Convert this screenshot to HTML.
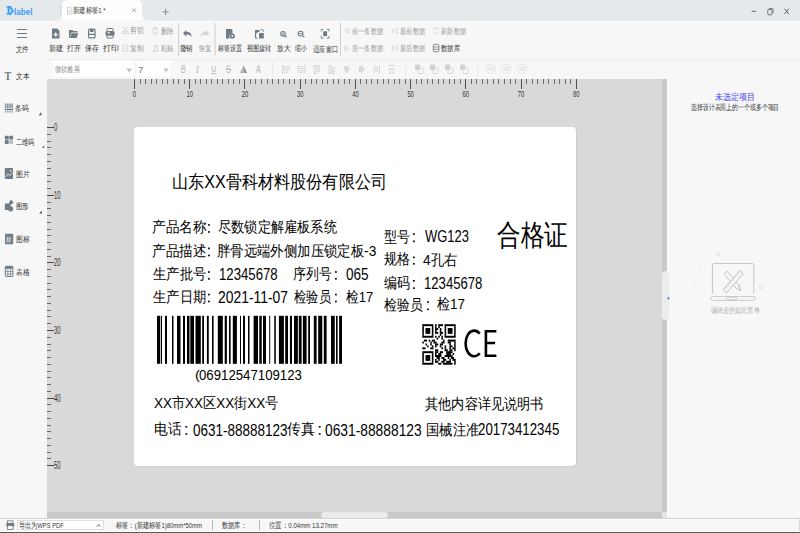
<!DOCTYPE html><html><head><meta charset="utf-8"><style>
*{margin:0;padding:0;box-sizing:border-box}
html,body{width:800px;height:533px;overflow:hidden;background:#f7f7f7;font-family:"Liberation Sans",sans-serif}
.a{position:absolute}
.t{position:absolute;line-height:1;white-space:pre;transform-origin:0 0}
</style></head><body>

<div class="a" style="left:0;top:0;width:800px;height:20px;background:#e6e9ec"></div>
<div class="a" style="left:62px;top:0;width:80px;height:20px;background:#fdfdfd;border-radius:5px 5px 0 0"></div>
<div class="a" style="left:57px;top:15px;width:5px;height:5px;background:#fdfdfd"></div><div class="a" style="left:52px;top:10px;width:10px;height:10px;background:#e6e9ec;border-radius:50%"></div>
<div class="a" style="left:142px;top:15px;width:5px;height:5px;background:#fdfdfd"></div><div class="a" style="left:142px;top:10px;width:10px;height:10px;background:#e6e9ec;border-radius:50%"></div>
<div class="a" style="left:0;top:20px;width:62px;height:1px;background:#eef0f2"></div><div class="a" style="left:142px;top:20px;width:658px;height:1px;background:#eef0f2"></div><div class="a" style="left:62px;top:20px;width:80px;height:1px;background:#f9f9f9"></div>
<div class="a" style="left:47px;top:59px;width:753px;height:1px;background:#ececec"></div>
<div class="a" style="left:47px;top:79px;width:615px;height:433px;background:#d9d9d9"></div>
<div class="a" style="left:662px;top:79px;width:5px;height:433px;background:#c9c9c9"></div>
<div class="a" style="left:667px;top:79px;width:1px;height:439px;background:#fdfdfd"></div>
<div class="a" style="left:662px;top:271px;width:7px;height:49px;background:#ececec;border-radius:4px"></div>
<div class="a" style="left:47px;top:512px;width:615px;height:6px;background:#c9c9c9"></div>
<div class="a" style="left:662px;top:512px;width:5px;height:6px;background:#e4e4e4"></div>
<div class="a" style="left:321px;top:512px;width:67px;height:5.5px;background:#ebebeb;border-radius:3px"></div>
<div class="a" style="left:0;top:518px;width:800px;height:1px;background:#d2d2d2"></div>
<div class="a" style="left:0;top:519px;width:800px;height:1px;background:#fcfcfc"></div>
<div class="a" style="left:799px;top:518px;width:1px;height:14px;background:#d6d6d6"></div>
<div class="a" style="left:0;top:531px;width:800px;height:1px;background:#ffffff"></div>
<div class="a" style="left:0;top:532px;width:800px;height:1px;background:#5a5a5a"></div>
<div class="a" style="left:17px;top:520px;width:87px;height:10px;background:#fff;border:1px solid #dedede"></div>
<div class="a" style="left:212px;top:519.5px;width:1px;height:10.5px;background:#b8b8b8"></div>
<div class="a" style="left:258.5px;top:519.5px;width:1px;height:10.5px;background:#b8b8b8"></div>
<div class="a" style="left:53px;top:61px;width:80.5px;height:16px;background:#fff"></div>
<div class="a" style="left:137px;top:61px;width:33px;height:16px;background:#fff"></div>
<div class="a" style="left:134px;top:127px;width:442px;height:338.5px;background:#fff;border-radius:4px;box-shadow:1px 1px 1px rgba(0,0,0,0.06)"></div>
<svg class="a" style="left:0;top:0" width="800" height="533" viewBox="0 0 800 533"><rect x="17" y="29.0" width="10" height="1" fill="#6f7c85"/><rect x="17" y="33.0" width="10" height="1" fill="#6f7c85"/><rect x="17" y="37.0" width="10" height="1" fill="#6f7c85"/><path d="M52 28.5 H57.2 L59.5 30.8 V38.5 H52 Z" fill="#6f7c85"/><rect x="55.2" y="32.3" width="1.1" height="4.6" fill="#fff"/><rect x="53.45" y="34.05" width="4.6" height="1.1" fill="#fff"/><path d="M69 30 H72.5 L73.5 31 H77.5 V32.5 H71.2 L69.6 38 H69 Z" fill="#6f7c85"/><path d="M71.5 33.3 H78.3 L76.7 38 H69.9 Z" fill="#6f7c85"/><rect x="88.6" y="29.1" width="6.4" height="8.8" rx="1" fill="none" stroke="#6f7c85" stroke-width="1.2"/><rect x="90" y="29" width="3.6" height="3" fill="#6f7c85"/><rect x="88.5" y="33.8" width="6.6" height="1.2" fill="#6f7c85"/><rect x="107" y="28.5" width="6" height="3" rx="0.5" fill="none" stroke="#6f7c85" stroke-width="1"/><rect x="105.5" y="31.3" width="9" height="4.5" rx="1" fill="#6f7c85"/><rect x="107" y="34.5" width="6" height="3.5" rx="0.5" fill="none" stroke="#6f7c85" stroke-width="1"/><rect x="107.5" y="32.3" width="2.5" height="1" fill="#fff"/><circle cx="123.9" cy="32.3" r="1.4" fill="none" stroke="#cfd3d6" stroke-width="0.9"/><circle cx="127.1" cy="32.3" r="1.4" fill="none" stroke="#cfd3d6" stroke-width="0.9"/><path d="M123 27 L127 31 M128 27 L124 31" stroke="#cfd3d6" stroke-width="0.9"/><path d="M152.5 28.7 H158 M154.2 28.7 V27.6 H156.3 V28.7 M153.2 29.5 L153.7 34 H156.8 L157.3 29.5" fill="none" stroke="#cfd3d6" stroke-width="0.9"/><rect x="122.8" y="45" width="5" height="6.3" rx="0.6" fill="none" stroke="#cfd3d6" stroke-width="0.9"/><path d="M124.3 47 H126.3 M124.3 48.6 H126.3" stroke="#cfd3d6" stroke-width="0.7"/><path d="M153 46 H154.5 M156 46 H157.5 V51.3 H153 Z" fill="none" stroke="#cfd3d6" stroke-width="0.9"/><rect x="154.3" y="45" width="2" height="1.6" fill="#cfd3d6"/><rect x="178.1" y="23" width="1" height="33" fill="#cdcdcd"/><rect x="214.5" y="23" width="1" height="33" fill="#cdcdcd"/><rect x="340.0" y="23" width="1" height="33" fill="#cdcdcd"/><path d="M183 33.2 L186.3 30 V31.8 C189.5 31.8 191.7 33.5 191.9 37 C190.6 35.2 188.8 34.6 186.3 34.6 V36.4 Z" fill="#6f7c85"/><path d="M209.2 33.2 L205.9 30 V31.8 C202.7 31.8 200.5 33.5 200.3 37 C201.6 35.2 203.4 34.6 205.9 34.6 V36.4 Z" fill="#cfd3d6"/><path d="M226 29 H231.5 L232.5 30 V33.5 A3 3 0 0 0 230 38.5 H226 Z" fill="#6f7c85"/><circle cx="232.3" cy="36" r="2.6" fill="#6f7c85"/><circle cx="232.3" cy="36" r="0.9" fill="#f7f7f7"/><path d="M255 30 H259.5 V32 A3 3 0 0 0 259 38.5 H255 Z" fill="#6f7c85"/><rect x="259" y="33" width="4.8" height="5.5" rx="0.6" fill="#6f7c85"/><path d="M260.5 29.5 A3 3 0 0 1 264 32" fill="none" stroke="#6f7c85" stroke-width="0.9"/><circle cx="283" cy="33.8" r="2.3" fill="none" stroke="#6f7c85" stroke-width="1.1"/><path d="M284.7 35.5 L286.6 37.4" stroke="#6f7c85" stroke-width="1.2"/><path d="M281.9 33.8 H284.1 M283 32.7 V34.9" stroke="#6f7c85" stroke-width="0.8"/><circle cx="300.6" cy="33.6" r="2.4" fill="none" stroke="#6f7c85" stroke-width="1.1"/><path d="M302.3 35.3 L304.4 37.4" stroke="#6f7c85" stroke-width="1.2"/><path d="M299.4 33.6 H301.8" stroke="#6f7c85" stroke-width="1"/><path d="M321.3 31.5 V29.4 H323.5 M326.8 29.4 H329 V31.5 M329 36 V38.2 H326.8 M323.5 38.2 H321.3 V36" fill="none" stroke="#6f7c85" stroke-width="0.9"/><rect x="323.2" y="31.3" width="3.9" height="4.9" fill="#6f7c85"/><path d="M348.8 28.3 L344.8 30.8 L348.8 33.3 Z" fill="none" stroke="#cfd3d6" stroke-width="0.8"/><path d="M344.8 45.8 L348.8 48.3 L344.8 50.8 Z" fill="none" stroke="#cfd3d6" stroke-width="0.8"/><path d="M397.3 28.3 L393.6 31 L397.3 33.7 Z M392.4 28.3 V33.7" fill="none" stroke="#cfd3d6" stroke-width="0.8"/><path d="M392.4 45.8 L396.1 48.5 L392.4 51.2 Z M397.3 45.8 V51.2" fill="none" stroke="#cfd3d6" stroke-width="0.8"/><path d="M438.8 29.5 A3.1 3.1 0 0 0 433.2 29.8 M433.2 31.5 A3.1 3.1 0 0 0 438.8 32.2" fill="none" stroke="#cfd3d6" stroke-width="0.9"/><rect x="433.3" y="44.3" width="5.6" height="7.5" rx="1.5" fill="none" stroke="#6f7c85" stroke-width="0.9"/><path d="M433.3 47 H438.9 M433.3 49.3 H438.9" stroke="#6f7c85" stroke-width="0.8"/><rect x="751.6" y="10.8" width="4.6" height="0.9" fill="#555"/><rect x="767.8" y="9.5" width="4.2" height="5.3" rx="0.8" fill="none" stroke="#666" stroke-width="0.9"/><path d="M769 8.5 H772.4 A0.8 0.8 0 0 1 773.2 9.3 V13" fill="none" stroke="#666" stroke-width="0.8"/><path d="M784.4 8.7 L789 14.2 M789 8.7 L784.4 14.2" stroke="#555" stroke-width="0.9"/><path d="M6.6 6.1 H10.9 L13.9 11.2 L10.9 14.7 H6.6 V13.3 H7.6 V7.5 H6.6 Z" fill="#3a9ef2"/><path d="M9.2 8.3 H10.2 L12 11.2 L10.2 13 H9.2 Z" fill="#a9d4f8"/><path d="M10 14.6 L10.6 15.7 L11.2 14.6 Z" fill="#3a9ef2"/><rect x="60.3" y="6" width="0.8" height="9" fill="#cdd1d5"/><path d="M67.5 7.7 H70.8 L72 8.9 V14.1 H67.5 Z" fill="none" stroke="#b9bcbf" stroke-width="0.7"/><path d="M68.5 10.5 H71 M68.5 12 H71" stroke="#b9bcbf" stroke-width="0.5"/><path d="M132.3 8.3 L136 12 M136 8.3 L132.3 12" stroke="#888" stroke-width="0.7"/><path d="M165.6 8.7 V15 M162.5 11.85 H168.7" stroke="#777" stroke-width="0.8"/><path d="M126.4 68.6 H132.2 L129.3 72.6 Z" fill="#c4c4c4"/><path d="M163.2 68.6 H169 L166.1 72.6 Z" fill="#c4c4c4"/><text x="181" y="73" font-family="Liberation Sans" font-size="10" fill="#b4b4b4" transform="translate(181 73) scale(0.72 1) translate(-181 -73)">B</text><text x="196" y="73" font-family="Liberation Serif" font-style="italic" font-size="10" fill="#b4b4b4" transform="translate(196 73) scale(0.8 1) translate(-196 -73)">I</text><text x="211.3" y="72" font-family="Liberation Sans" font-size="9" fill="#b4b4b4" transform="translate(211.3 72) scale(0.75 1) translate(-211.3 -72)">U</text><rect x="211" y="73" width="5.4" height="0.8" fill="#b4b4b4"/><text x="226" y="73" font-family="Liberation Sans" font-size="10" fill="#b4b4b4" transform="translate(226 73) scale(0.72 1) translate(-226 -73)">S</text><rect x="225.5" y="69" width="6" height="0.8" fill="#b4b4b4"/><path d="M240 73 L243.5 65.5 L247 73 Z" fill="#b4b4b4"/><path d="M243.5 65.5 L247 73 H244.5 Z" fill="#909090"/><text x="256" y="73" font-family="Liberation Sans" font-size="10" fill="#b4b4b4" transform="translate(256 73) scale(0.72 1) translate(-256 -73)">A</text><rect x="272.4" y="61" width="0.8" height="16" fill="#e6e6e6"/><rect x="405.3" y="61" width="0.8" height="16" fill="#e6e6e6"/><rect x="477.6" y="61" width="0.8" height="16" fill="#e6e6e6"/><rect x="282" y="65" width="0.9" height="8.5" fill="#d2d2d2"/><rect x="284" y="66.5" width="5.5" height="2.2" fill="none" stroke="#d2d2d2" stroke-width="0.8"/><rect x="284" y="70.2" width="4" height="2.2" fill="none" stroke="#d2d2d2" stroke-width="0.8"/><rect x="304.5" y="65" width="0.9" height="8.5" fill="#d2d2d2"/><rect x="297.5" y="66.5" width="5.5" height="2.2" fill="none" stroke="#d2d2d2" stroke-width="0.8"/><rect x="299" y="70.2" width="4" height="2.2" fill="none" stroke="#d2d2d2" stroke-width="0.8"/><rect x="313" y="65" width="7" height="0.9" fill="#d2d2d2"/><rect x="314" y="67" width="2" height="6.5" fill="none" stroke="#d2d2d2" stroke-width="0.8"/><rect x="317.3" y="67" width="2" height="4.5" fill="none" stroke="#d2d2d2" stroke-width="0.8"/><rect x="328" y="72.8" width="7" height="0.9" fill="#d2d2d2"/><rect x="329" y="65.5" width="2" height="6.5" fill="none" stroke="#d2d2d2" stroke-width="0.8"/><rect x="332.3" y="67.5" width="2" height="4.5" fill="none" stroke="#d2d2d2" stroke-width="0.8"/><rect x="343" y="69" width="7" height="0.9" fill="#d2d2d2"/><rect x="344" y="66.5" width="5" height="2" fill="#d2d2d2"/><rect x="344.8" y="70.5" width="3.5" height="2" fill="#d2d2d2"/><rect x="361" y="65" width="0.9" height="8.5" fill="#d2d2d2"/><rect x="359" y="66.5" width="1.8" height="5.5" fill="#d2d2d2"/><rect x="362.4" y="67.3" width="1.8" height="4" fill="#d2d2d2"/><rect x="373.6" y="65" width="0.8" height="8.5" fill="#d2d2d2"/><rect x="379.1" y="65" width="0.8" height="8.5" fill="#d2d2d2"/><rect x="375.90000000000003" y="67" width="1.8" height="4.5" fill="none" stroke="#d2d2d2" stroke-width="0.7"/><rect x="388" y="65" width="7" height="0.8" fill="#d2d2d2"/><rect x="388" y="72.7" width="7" height="0.8" fill="#d2d2d2"/><rect x="389.5" y="68.3" width="4" height="1.8" fill="none" stroke="#d2d2d2" stroke-width="0.7"/><rect x="415" y="64.5" width="5" height="5.5" rx="0.8" fill="#d2d2d2"/><rect x="418" y="68" width="5" height="5.5" rx="0.8" fill="none" stroke="#d2d2d2" stroke-width="0.9"/><rect x="430" y="64.5" width="5" height="5.5" rx="0.8" fill="#d2d2d2"/><rect x="433" y="68" width="5" height="5.5" rx="0.8" fill="none" stroke="#d2d2d2" stroke-width="0.9"/><rect x="445" y="64.5" width="5" height="5.5" rx="0.8" fill="#d2d2d2"/><rect x="448" y="68" width="5" height="5.5" rx="0.8" fill="none" stroke="#d2d2d2" stroke-width="0.9"/><rect x="460" y="64.5" width="5" height="5.5" rx="0.8" fill="#d2d2d2"/><rect x="463" y="68" width="5" height="5.5" rx="0.8" fill="none" stroke="#d2d2d2" stroke-width="0.9"/><circle cx="491" cy="69" r="4.6" fill="none" stroke="#e2e2e2" stroke-width="0.9"/><text x="488.4" y="71" font-size="5" font-family="Liberation Sans" fill="#d8d8d8">90</text><circle cx="506" cy="69" r="4.6" fill="none" stroke="#e2e2e2" stroke-width="0.9"/><text x="503.4" y="71" font-size="5" font-family="Liberation Sans" fill="#d8d8d8">90</text><circle cx="522" cy="69" r="4.6" fill="none" stroke="#e2e2e2" stroke-width="0.9"/><text x="519.4" y="71" font-size="5" font-family="Liberation Sans" fill="#d8d8d8">90</text><rect x="134" y="79" width="1" height="10" fill="#505050"/><rect x="140" y="79" width="1" height="5" fill="#6a6a6a"/><rect x="145" y="79" width="1" height="5" fill="#6a6a6a"/><rect x="151" y="79" width="1" height="5" fill="#6a6a6a"/><rect x="156" y="79" width="1" height="5" fill="#6a6a6a"/><rect x="162" y="79" width="1" height="5" fill="#6a6a6a"/><rect x="167" y="79" width="1" height="5" fill="#6a6a6a"/><rect x="173" y="79" width="1" height="5" fill="#6a6a6a"/><rect x="178" y="79" width="1" height="5" fill="#6a6a6a"/><rect x="184" y="79" width="1" height="5" fill="#6a6a6a"/><rect x="189" y="79" width="1" height="10" fill="#505050"/><rect x="195" y="79" width="1" height="5" fill="#6a6a6a"/><rect x="200" y="79" width="1" height="5" fill="#6a6a6a"/><rect x="206" y="79" width="1" height="5" fill="#6a6a6a"/><rect x="211" y="79" width="1" height="5" fill="#6a6a6a"/><rect x="217" y="79" width="1" height="5" fill="#6a6a6a"/><rect x="222" y="79" width="1" height="5" fill="#6a6a6a"/><rect x="228" y="79" width="1" height="5" fill="#6a6a6a"/><rect x="233" y="79" width="1" height="5" fill="#6a6a6a"/><rect x="239" y="79" width="1" height="5" fill="#6a6a6a"/><rect x="244" y="79" width="1" height="10" fill="#505050"/><rect x="250" y="79" width="1" height="5" fill="#6a6a6a"/><rect x="255" y="79" width="1" height="5" fill="#6a6a6a"/><rect x="261" y="79" width="1" height="5" fill="#6a6a6a"/><rect x="267" y="79" width="1" height="5" fill="#6a6a6a"/><rect x="272" y="79" width="1" height="5" fill="#6a6a6a"/><rect x="278" y="79" width="1" height="5" fill="#6a6a6a"/><rect x="283" y="79" width="1" height="5" fill="#6a6a6a"/><rect x="289" y="79" width="1" height="5" fill="#6a6a6a"/><rect x="294" y="79" width="1" height="5" fill="#6a6a6a"/><rect x="300" y="79" width="1" height="10" fill="#505050"/><rect x="305" y="79" width="1" height="5" fill="#6a6a6a"/><rect x="311" y="79" width="1" height="5" fill="#6a6a6a"/><rect x="316" y="79" width="1" height="5" fill="#6a6a6a"/><rect x="322" y="79" width="1" height="5" fill="#6a6a6a"/><rect x="327" y="79" width="1" height="5" fill="#6a6a6a"/><rect x="333" y="79" width="1" height="5" fill="#6a6a6a"/><rect x="338" y="79" width="1" height="5" fill="#6a6a6a"/><rect x="344" y="79" width="1" height="5" fill="#6a6a6a"/><rect x="349" y="79" width="1" height="5" fill="#6a6a6a"/><rect x="355" y="79" width="1" height="10" fill="#505050"/><rect x="360" y="79" width="1" height="5" fill="#6a6a6a"/><rect x="366" y="79" width="1" height="5" fill="#6a6a6a"/><rect x="371" y="79" width="1" height="5" fill="#6a6a6a"/><rect x="377" y="79" width="1" height="5" fill="#6a6a6a"/><rect x="383" y="79" width="1" height="5" fill="#6a6a6a"/><rect x="388" y="79" width="1" height="5" fill="#6a6a6a"/><rect x="394" y="79" width="1" height="5" fill="#6a6a6a"/><rect x="399" y="79" width="1" height="5" fill="#6a6a6a"/><rect x="405" y="79" width="1" height="5" fill="#6a6a6a"/><rect x="410" y="79" width="1" height="10" fill="#505050"/><rect x="416" y="79" width="1" height="5" fill="#6a6a6a"/><rect x="421" y="79" width="1" height="5" fill="#6a6a6a"/><rect x="427" y="79" width="1" height="5" fill="#6a6a6a"/><rect x="432" y="79" width="1" height="5" fill="#6a6a6a"/><rect x="438" y="79" width="1" height="5" fill="#6a6a6a"/><rect x="443" y="79" width="1" height="5" fill="#6a6a6a"/><rect x="449" y="79" width="1" height="5" fill="#6a6a6a"/><rect x="454" y="79" width="1" height="5" fill="#6a6a6a"/><rect x="460" y="79" width="1" height="5" fill="#6a6a6a"/><rect x="465" y="79" width="1" height="10" fill="#505050"/><rect x="471" y="79" width="1" height="5" fill="#6a6a6a"/><rect x="476" y="79" width="1" height="5" fill="#6a6a6a"/><rect x="482" y="79" width="1" height="5" fill="#6a6a6a"/><rect x="487" y="79" width="1" height="5" fill="#6a6a6a"/><rect x="493" y="79" width="1" height="5" fill="#6a6a6a"/><rect x="498" y="79" width="1" height="5" fill="#6a6a6a"/><rect x="504" y="79" width="1" height="5" fill="#6a6a6a"/><rect x="510" y="79" width="1" height="5" fill="#6a6a6a"/><rect x="515" y="79" width="1" height="5" fill="#6a6a6a"/><rect x="521" y="79" width="1" height="10" fill="#505050"/><rect x="526" y="79" width="1" height="5" fill="#6a6a6a"/><rect x="532" y="79" width="1" height="5" fill="#6a6a6a"/><rect x="537" y="79" width="1" height="5" fill="#6a6a6a"/><rect x="543" y="79" width="1" height="5" fill="#6a6a6a"/><rect x="548" y="79" width="1" height="5" fill="#6a6a6a"/><rect x="554" y="79" width="1" height="5" fill="#6a6a6a"/><rect x="559" y="79" width="1" height="5" fill="#6a6a6a"/><rect x="565" y="79" width="1" height="5" fill="#6a6a6a"/><rect x="570" y="79" width="1" height="5" fill="#6a6a6a"/><rect x="576" y="79" width="1" height="10" fill="#505050"/><rect x="47" y="127" width="7" height="1" fill="#4a4a4a"/><rect x="47" y="134" width="4" height="1" fill="#6a6a6a"/><rect x="47" y="141" width="4" height="1" fill="#6a6a6a"/><rect x="47" y="147" width="4" height="1" fill="#6a6a6a"/><rect x="47" y="154" width="4" height="1" fill="#6a6a6a"/><rect x="47" y="161" width="4" height="1" fill="#6a6a6a"/><rect x="47" y="168" width="4" height="1" fill="#6a6a6a"/><rect x="47" y="175" width="4" height="1" fill="#6a6a6a"/><rect x="47" y="181" width="4" height="1" fill="#6a6a6a"/><rect x="47" y="188" width="4" height="1" fill="#6a6a6a"/><rect x="47" y="195" width="7" height="1" fill="#4a4a4a"/><rect x="47" y="202" width="4" height="1" fill="#6a6a6a"/><rect x="47" y="208" width="4" height="1" fill="#6a6a6a"/><rect x="47" y="215" width="4" height="1" fill="#6a6a6a"/><rect x="47" y="222" width="4" height="1" fill="#6a6a6a"/><rect x="47" y="229" width="4" height="1" fill="#6a6a6a"/><rect x="47" y="235" width="4" height="1" fill="#6a6a6a"/><rect x="47" y="242" width="4" height="1" fill="#6a6a6a"/><rect x="47" y="249" width="4" height="1" fill="#6a6a6a"/><rect x="47" y="256" width="4" height="1" fill="#6a6a6a"/><rect x="47" y="262" width="7" height="1" fill="#4a4a4a"/><rect x="47" y="269" width="4" height="1" fill="#6a6a6a"/><rect x="47" y="276" width="4" height="1" fill="#6a6a6a"/><rect x="47" y="283" width="4" height="1" fill="#6a6a6a"/><rect x="47" y="289" width="4" height="1" fill="#6a6a6a"/><rect x="47" y="296" width="4" height="1" fill="#6a6a6a"/><rect x="47" y="303" width="4" height="1" fill="#6a6a6a"/><rect x="47" y="310" width="4" height="1" fill="#6a6a6a"/><rect x="47" y="316" width="4" height="1" fill="#6a6a6a"/><rect x="47" y="323" width="4" height="1" fill="#6a6a6a"/><rect x="47" y="330" width="7" height="1" fill="#4a4a4a"/><rect x="47" y="337" width="4" height="1" fill="#6a6a6a"/><rect x="47" y="344" width="4" height="1" fill="#6a6a6a"/><rect x="47" y="350" width="4" height="1" fill="#6a6a6a"/><rect x="47" y="357" width="4" height="1" fill="#6a6a6a"/><rect x="47" y="364" width="4" height="1" fill="#6a6a6a"/><rect x="47" y="371" width="4" height="1" fill="#6a6a6a"/><rect x="47" y="377" width="4" height="1" fill="#6a6a6a"/><rect x="47" y="384" width="4" height="1" fill="#6a6a6a"/><rect x="47" y="391" width="4" height="1" fill="#6a6a6a"/><rect x="47" y="398" width="7" height="1" fill="#4a4a4a"/><rect x="47" y="404" width="4" height="1" fill="#6a6a6a"/><rect x="47" y="411" width="4" height="1" fill="#6a6a6a"/><rect x="47" y="418" width="4" height="1" fill="#6a6a6a"/><rect x="47" y="425" width="4" height="1" fill="#6a6a6a"/><rect x="47" y="431" width="4" height="1" fill="#6a6a6a"/><rect x="47" y="438" width="4" height="1" fill="#6a6a6a"/><rect x="47" y="445" width="4" height="1" fill="#6a6a6a"/><rect x="47" y="452" width="4" height="1" fill="#6a6a6a"/><rect x="47" y="458" width="4" height="1" fill="#6a6a6a"/><rect x="47" y="465" width="7" height="1" fill="#4a4a4a"/><text x="134.5" y="96.6" font-family="Liberation Sans" font-size="9.4" fill="#333" text-anchor="middle" transform="translate(134.5 0) scale(0.62 1) translate(-134.5 0)">0</text><text x="189.725" y="96.6" font-family="Liberation Sans" font-size="9.4" fill="#333" text-anchor="middle" transform="translate(189.725 0) scale(0.62 1) translate(-189.725 0)">10</text><text x="244.95" y="96.6" font-family="Liberation Sans" font-size="9.4" fill="#333" text-anchor="middle" transform="translate(244.95 0) scale(0.62 1) translate(-244.95 0)">20</text><text x="300.175" y="96.6" font-family="Liberation Sans" font-size="9.4" fill="#333" text-anchor="middle" transform="translate(300.175 0) scale(0.62 1) translate(-300.175 0)">30</text><text x="355.4" y="96.6" font-family="Liberation Sans" font-size="9.4" fill="#333" text-anchor="middle" transform="translate(355.4 0) scale(0.62 1) translate(-355.4 0)">40</text><text x="410.625" y="96.6" font-family="Liberation Sans" font-size="9.4" fill="#333" text-anchor="middle" transform="translate(410.625 0) scale(0.62 1) translate(-410.625 0)">50</text><text x="465.85" y="96.6" font-family="Liberation Sans" font-size="9.4" fill="#333" text-anchor="middle" transform="translate(465.85 0) scale(0.62 1) translate(-465.85 0)">60</text><text x="521.075" y="96.6" font-family="Liberation Sans" font-size="9.4" fill="#333" text-anchor="middle" transform="translate(521.075 0) scale(0.62 1) translate(-521.075 0)">70</text><text x="576.3" y="96.6" font-family="Liberation Sans" font-size="9.4" fill="#333" text-anchor="middle" transform="translate(576.3 0) scale(0.62 1) translate(-576.3 0)">80</text><text x="54" y="131.3" font-family="Liberation Sans" font-size="10" fill="#333" transform="translate(54 0) scale(0.6 1) translate(-54 0)">0</text><text x="54" y="198.9" font-family="Liberation Sans" font-size="10" fill="#333" transform="translate(54 0) scale(0.6 1) translate(-54 0)">10</text><text x="54" y="266.5" font-family="Liberation Sans" font-size="10" fill="#333" transform="translate(54 0) scale(0.6 1) translate(-54 0)">20</text><text x="54" y="334.1" font-family="Liberation Sans" font-size="10" fill="#333" transform="translate(54 0) scale(0.6 1) translate(-54 0)">30</text><text x="54" y="401.7" font-family="Liberation Sans" font-size="10" fill="#333" transform="translate(54 0) scale(0.6 1) translate(-54 0)">40</text><text x="54" y="469.3" font-family="Liberation Sans" font-size="10" fill="#333" transform="translate(54 0) scale(0.6 1) translate(-54 0)">50</text><text x="4.6" y="80.5" font-family="Liberation Serif" font-weight="bold" font-size="13" fill="#6f7c85" transform="translate(4.6 0) scale(0.78 1) translate(-4.6 0)">T</text><rect x="4.8" y="103.5" width="1.6" height="5" fill="#8c969c"/><rect x="4.8" y="110.8" width="1.6" height="1.8" fill="#a9b1b5"/><rect x="7.0" y="103.5" width="1.6" height="5" fill="#8c969c"/><rect x="7.0" y="110.8" width="1.6" height="1.8" fill="#a9b1b5"/><rect x="9.2" y="103.5" width="1.6" height="5" fill="#8c969c"/><rect x="9.2" y="110.8" width="1.6" height="1.8" fill="#a9b1b5"/><rect x="11.4" y="103.5" width="1.6" height="5" fill="#8c969c"/><rect x="11.4" y="110.8" width="1.6" height="1.8" fill="#a9b1b5"/><rect x="4.8" y="109" width="8.4" height="1.2" fill="#6f7c85"/><rect x="4.8" y="135.7" width="3.9" height="3.9" rx="0.7" fill="#6f7c85"/><rect x="9.2" y="135.7" width="3.9" height="3.9" rx="0.7" fill="#6f7c85"/><rect x="4.8" y="140.1" width="3.9" height="3.9" rx="0.7" fill="#6f7c85"/><rect x="9.2" y="140.1" width="3.9" height="3.9" rx="0.7" fill="#b9c0c4"/><rect x="4.8" y="168" width="8.2" height="11" rx="0.8" fill="#6f7c85"/><path d="M5.6 177.2 L8 173.6 L9.8 175.8 L12.2 172.6" fill="none" stroke="#dfe3e5" stroke-width="0.9"/><circle cx="10.6" cy="170.6" r="0.9" fill="#dfe3e5"/><rect x="4.9" y="203.5" width="5.6" height="6.5" fill="#6f7c85"/><circle cx="10.6" cy="208.8" r="2.6" fill="#6f7c85"/><path d="M10.8 199.6 L13.6 202.3 L10.8 205 L8.9 203.2 Z" fill="#6f7c85"/><rect x="5" y="233.8" width="8.2" height="10.5" rx="1" fill="#6f7c85"/><text x="6" y="242" font-size="7" fill="#e8eaeb" font-family="Liberation Sans" transform="translate(6 0) scale(0.8 1) translate(-6 0)">标</text><rect x="5.3" y="266.3" width="7.6" height="10.2" rx="0.8" fill="none" stroke="#6f7c85" stroke-width="1"/><rect x="5.3" y="266.3" width="7.6" height="2.5" fill="#6f7c85"/><path d="M5.3 271.5 H12.9 M5.3 274 H12.9 M7.8 268.8 V276.5 M10.4 268.8 V276.5" stroke="#6f7c85" stroke-width="0.7"/><path d="M41.3 112.3 V115.3 H38.6 Z" fill="#444"/><path d="M44.2 145.5 V147.7 H42 Z" fill="#444"/><path d="M42 211 V213.6 H39 Z" fill="#444"/><path d="M712.5 293.8 V265.5 A2 2 0 0 1 714.5 263.5 H751.8 A2 2 0 0 1 753.8 265.5 V293.8" fill="none" stroke="#c9c9c9" stroke-width="1.1"/><rect x="710.8" y="296.6" width="44.6" height="3.8" rx="1.9" fill="none" stroke="#c9c9c9" stroke-width="1"/><rect x="726.5" y="297.2" width="10.5" height="2.6" rx="1.3" fill="none" stroke="#c9c9c9" stroke-width="0.9"/><g transform="translate(733.3 281.6) scale(0.85 1)"><g transform="rotate(-45)"><rect x="-2.3" y="-12.5" width="4.6" height="20.5" fill="#f7f7f7" stroke="#bdbdbd" stroke-width="0.9"/><path d="M-2.3 8 L0 12.5 L2.3 8" fill="#f7f7f7" stroke="#bdbdbd" stroke-width="0.9"/></g><g transform="rotate(45)"><rect x="-2.5" y="-13.5" width="5" height="27" fill="#f7f7f7" stroke="#bdbdbd" stroke-width="0.9"/><path d="M-2.5 -11.0 H-0.4" stroke="#c4c4c4" stroke-width="0.7"/><path d="M-2.5 -8.4 H-0.4" stroke="#c4c4c4" stroke-width="0.7"/><path d="M-2.5 -5.8 H-0.4" stroke="#c4c4c4" stroke-width="0.7"/><path d="M-2.5 -3.2 H-0.4" stroke="#c4c4c4" stroke-width="0.7"/><path d="M-2.5 -0.6 H-0.4" stroke="#c4c4c4" stroke-width="0.7"/><path d="M-2.5 2.0 H-0.4" stroke="#c4c4c4" stroke-width="0.7"/><path d="M-2.5 4.6 H-0.4" stroke="#c4c4c4" stroke-width="0.7"/><path d="M-2.5 7.2 H-0.4" stroke="#c4c4c4" stroke-width="0.7"/><path d="M-2.5 9.8 H-0.4" stroke="#c4c4c4" stroke-width="0.7"/></g></g><circle cx="717.8" cy="254.1" r="1.6" fill="none" stroke="#d8d8d8" stroke-width="0.7"/><ellipse cx="761" cy="287" rx="1.5" ry="2" fill="none" stroke="#d8d8d8" stroke-width="0.7"/><circle cx="700" cy="269.5" r="0.7" fill="#dcdcdc"/><circle cx="694" cy="286" r="0.7" fill="#dcdcdc"/><circle cx="761.5" cy="266" r="0.7" fill="#dcdcdc"/><circle cx="768" cy="298" r="0.7" fill="#dcdcdc"/><path d="M667.7 296.7 L670 298.35 L667.7 300 Z" fill="#2b7de9"/><rect x="7.5" y="520.8" width="5.5" height="2.5" fill="none" stroke="#6f7c85" stroke-width="0.8"/><rect x="6.3" y="523" width="7.9" height="3.8" rx="0.8" fill="#6f7c85"/><rect x="7.5" y="525.5" width="5.5" height="4" fill="#f7f7f7" stroke="#6f7c85" stroke-width="0.8"/><path d="M96.8 526.7 L98.6 524.4 L100.4 526.7" fill="none" stroke="#555" stroke-width="0.8"/><rect x="157" y="315.8" width="3" height="48" fill="#000"/><rect x="160.75" y="315.8" width="1.25" height="48" fill="#000"/><rect x="165" y="315.8" width="2" height="48" fill="#000"/><rect x="172" y="315.8" width="1.5" height="48" fill="#000"/><rect x="177" y="315.8" width="3.5" height="48" fill="#000"/><rect x="183" y="315.8" width="2" height="48" fill="#000"/><rect x="187" y="315.8" width="2.5" height="48" fill="#000"/><rect x="190.3" y="315.8" width="3.6999999999999886" height="48" fill="#000"/><rect x="195.5" y="315.8" width="5.300000000000011" height="48" fill="#000"/><rect x="202.2" y="315.8" width="1.8000000000000114" height="48" fill="#000"/><rect x="206.9" y="315.8" width="1.8499999999999943" height="48" fill="#000"/><rect x="212" y="315.8" width="1.5999999999999943" height="48" fill="#000"/><rect x="217.8" y="315.8" width="5.0" height="48" fill="#000"/><rect x="224.7" y="315.8" width="2.200000000000017" height="48" fill="#000"/><rect x="229" y="315.8" width="1.5999999999999943" height="48" fill="#000"/><rect x="232.8" y="315.8" width="4.099999999999994" height="48" fill="#000"/><rect x="240" y="315.8" width="1" height="48" fill="#000"/><rect x="243" y="315.8" width="2" height="48" fill="#000"/><rect x="248" y="315.8" width="1.5" height="48" fill="#000"/><rect x="253.6" y="315.8" width="4.400000000000006" height="48" fill="#000"/><rect x="259.25" y="315.8" width="2.5" height="48" fill="#000"/><rect x="263" y="315.8" width="3" height="48" fill="#000"/><rect x="269.25" y="315.8" width="0.9499999999999886" height="48" fill="#000"/><rect x="274.25" y="315.8" width="1.5500000000000114" height="48" fill="#000"/><rect x="278.9" y="315.8" width="5.0" height="48" fill="#000"/><rect x="285.2" y="315.8" width="2.8000000000000114" height="48" fill="#000"/><rect x="289.9" y="315.8" width="2.1000000000000227" height="48" fill="#000"/><rect x="294" y="315.8" width="3.8999999999999773" height="48" fill="#000"/><rect x="298.8" y="315.8" width="2.8000000000000114" height="48" fill="#000"/><rect x="302.9" y="315.8" width="3.7000000000000455" height="48" fill="#000"/><rect x="308.2" y="315.8" width="1.8000000000000114" height="48" fill="#000"/><rect x="313.8" y="315.8" width="2.8000000000000114" height="48" fill="#000"/><rect x="318.2" y="315.8" width="4.050000000000011" height="48" fill="#000"/><rect x="323.8" y="315.8" width="2.8000000000000114" height="48" fill="#000"/><rect x="331" y="315.8" width="3.75" height="48" fill="#000"/><rect x="336" y="315.8" width="1.6000000000000227" height="48" fill="#000"/><rect x="339.1" y="315.8" width="2.8999999999999773" height="48" fill="#000"/><rect x="422.30" y="324.20" width="11.13" height="1.95" fill="#000"/><rect x="435.02" y="324.20" width="1.59" height="1.95" fill="#000"/><rect x="438.20" y="324.20" width="4.77" height="1.95" fill="#000"/><rect x="444.57" y="324.20" width="11.13" height="1.95" fill="#000"/><rect x="422.30" y="326.13" width="1.59" height="1.95" fill="#000"/><rect x="431.84" y="326.13" width="1.59" height="1.95" fill="#000"/><rect x="435.02" y="326.13" width="1.59" height="1.95" fill="#000"/><rect x="438.20" y="326.13" width="1.59" height="1.95" fill="#000"/><rect x="444.57" y="326.13" width="1.59" height="1.95" fill="#000"/><rect x="454.11" y="326.13" width="1.59" height="1.95" fill="#000"/><rect x="422.30" y="328.06" width="1.59" height="1.95" fill="#000"/><rect x="425.48" y="328.06" width="4.77" height="1.95" fill="#000"/><rect x="431.84" y="328.06" width="1.59" height="1.95" fill="#000"/><rect x="435.02" y="328.06" width="3.18" height="1.95" fill="#000"/><rect x="439.80" y="328.06" width="1.59" height="1.95" fill="#000"/><rect x="444.57" y="328.06" width="1.59" height="1.95" fill="#000"/><rect x="447.75" y="328.06" width="4.77" height="1.95" fill="#000"/><rect x="454.11" y="328.06" width="1.59" height="1.95" fill="#000"/><rect x="422.30" y="329.99" width="1.59" height="1.95" fill="#000"/><rect x="425.48" y="329.99" width="4.77" height="1.95" fill="#000"/><rect x="431.84" y="329.99" width="1.59" height="1.95" fill="#000"/><rect x="435.02" y="329.99" width="1.59" height="1.95" fill="#000"/><rect x="439.80" y="329.99" width="1.59" height="1.95" fill="#000"/><rect x="444.57" y="329.99" width="1.59" height="1.95" fill="#000"/><rect x="447.75" y="329.99" width="4.77" height="1.95" fill="#000"/><rect x="454.11" y="329.99" width="1.59" height="1.95" fill="#000"/><rect x="422.30" y="331.91" width="1.59" height="1.95" fill="#000"/><rect x="425.48" y="331.91" width="4.77" height="1.95" fill="#000"/><rect x="431.84" y="331.91" width="1.59" height="1.95" fill="#000"/><rect x="435.02" y="331.91" width="3.18" height="1.95" fill="#000"/><rect x="439.80" y="331.91" width="3.18" height="1.95" fill="#000"/><rect x="444.57" y="331.91" width="1.59" height="1.95" fill="#000"/><rect x="447.75" y="331.91" width="4.77" height="1.95" fill="#000"/><rect x="454.11" y="331.91" width="1.59" height="1.95" fill="#000"/><rect x="422.30" y="333.84" width="1.59" height="1.95" fill="#000"/><rect x="431.84" y="333.84" width="1.59" height="1.95" fill="#000"/><rect x="439.80" y="333.84" width="1.59" height="1.95" fill="#000"/><rect x="444.57" y="333.84" width="1.59" height="1.95" fill="#000"/><rect x="454.11" y="333.84" width="1.59" height="1.95" fill="#000"/><rect x="422.30" y="335.77" width="11.13" height="1.95" fill="#000"/><rect x="435.02" y="335.77" width="1.59" height="1.95" fill="#000"/><rect x="438.20" y="335.77" width="1.59" height="1.95" fill="#000"/><rect x="441.39" y="335.77" width="1.59" height="1.95" fill="#000"/><rect x="444.57" y="335.77" width="11.13" height="1.95" fill="#000"/><rect x="436.61" y="337.70" width="1.59" height="1.95" fill="#000"/><rect x="441.39" y="337.70" width="1.59" height="1.95" fill="#000"/><rect x="423.89" y="339.63" width="3.18" height="1.95" fill="#000"/><rect x="428.66" y="339.63" width="1.59" height="1.95" fill="#000"/><rect x="431.84" y="339.63" width="3.18" height="1.95" fill="#000"/><rect x="442.98" y="339.63" width="1.59" height="1.95" fill="#000"/><rect x="447.75" y="339.63" width="7.95" height="1.95" fill="#000"/><rect x="422.30" y="341.56" width="1.59" height="1.95" fill="#000"/><rect x="430.25" y="341.56" width="1.59" height="1.95" fill="#000"/><rect x="433.43" y="341.56" width="3.18" height="1.95" fill="#000"/><rect x="441.39" y="341.56" width="3.18" height="1.95" fill="#000"/><rect x="447.75" y="341.56" width="3.18" height="1.95" fill="#000"/><rect x="454.11" y="341.56" width="1.59" height="1.95" fill="#000"/><rect x="425.48" y="343.49" width="1.59" height="1.95" fill="#000"/><rect x="430.25" y="343.49" width="1.59" height="1.95" fill="#000"/><rect x="435.02" y="343.49" width="3.18" height="1.95" fill="#000"/><rect x="439.80" y="343.49" width="3.18" height="1.95" fill="#000"/><rect x="449.34" y="343.49" width="1.59" height="1.95" fill="#000"/><rect x="454.11" y="343.49" width="1.59" height="1.95" fill="#000"/><rect x="427.07" y="345.41" width="1.59" height="1.95" fill="#000"/><rect x="431.84" y="345.41" width="1.59" height="1.95" fill="#000"/><rect x="435.02" y="345.41" width="1.59" height="1.95" fill="#000"/><rect x="439.80" y="345.41" width="1.59" height="1.95" fill="#000"/><rect x="444.57" y="345.41" width="1.59" height="1.95" fill="#000"/><rect x="449.34" y="345.41" width="3.18" height="1.95" fill="#000"/><rect x="454.11" y="345.41" width="1.59" height="1.95" fill="#000"/><rect x="422.30" y="347.34" width="3.18" height="1.95" fill="#000"/><rect x="430.25" y="347.34" width="3.18" height="1.95" fill="#000"/><rect x="441.39" y="347.34" width="1.59" height="1.95" fill="#000"/><rect x="444.57" y="347.34" width="1.59" height="1.95" fill="#000"/><rect x="449.34" y="347.34" width="1.59" height="1.95" fill="#000"/><rect x="452.52" y="347.34" width="3.18" height="1.95" fill="#000"/><rect x="435.02" y="349.27" width="3.18" height="1.95" fill="#000"/><rect x="444.57" y="349.27" width="3.18" height="1.95" fill="#000"/><rect x="449.34" y="349.27" width="3.18" height="1.95" fill="#000"/><rect x="454.11" y="349.27" width="1.59" height="1.95" fill="#000"/><rect x="422.30" y="351.20" width="11.13" height="1.95" fill="#000"/><rect x="435.02" y="351.20" width="3.18" height="1.95" fill="#000"/><rect x="439.80" y="351.20" width="3.18" height="1.95" fill="#000"/><rect x="446.16" y="351.20" width="6.36" height="1.95" fill="#000"/><rect x="422.30" y="353.13" width="1.59" height="1.95" fill="#000"/><rect x="431.84" y="353.13" width="1.59" height="1.95" fill="#000"/><rect x="435.02" y="353.13" width="1.59" height="1.95" fill="#000"/><rect x="438.20" y="353.13" width="3.18" height="1.95" fill="#000"/><rect x="446.16" y="353.13" width="4.77" height="1.95" fill="#000"/><rect x="452.52" y="353.13" width="1.59" height="1.95" fill="#000"/><rect x="422.30" y="355.06" width="1.59" height="1.95" fill="#000"/><rect x="425.48" y="355.06" width="4.77" height="1.95" fill="#000"/><rect x="431.84" y="355.06" width="1.59" height="1.95" fill="#000"/><rect x="435.02" y="355.06" width="6.36" height="1.95" fill="#000"/><rect x="444.57" y="355.06" width="7.95" height="1.95" fill="#000"/><rect x="422.30" y="356.99" width="1.59" height="1.95" fill="#000"/><rect x="425.48" y="356.99" width="4.77" height="1.95" fill="#000"/><rect x="431.84" y="356.99" width="1.59" height="1.95" fill="#000"/><rect x="436.61" y="356.99" width="3.18" height="1.95" fill="#000"/><rect x="441.39" y="356.99" width="3.18" height="1.95" fill="#000"/><rect x="447.75" y="356.99" width="1.59" height="1.95" fill="#000"/><rect x="450.93" y="356.99" width="3.18" height="1.95" fill="#000"/><rect x="422.30" y="358.91" width="1.59" height="1.95" fill="#000"/><rect x="425.48" y="358.91" width="4.77" height="1.95" fill="#000"/><rect x="431.84" y="358.91" width="1.59" height="1.95" fill="#000"/><rect x="435.02" y="358.91" width="1.59" height="1.95" fill="#000"/><rect x="438.20" y="358.91" width="1.59" height="1.95" fill="#000"/><rect x="442.98" y="358.91" width="3.18" height="1.95" fill="#000"/><rect x="449.34" y="358.91" width="1.59" height="1.95" fill="#000"/><rect x="452.52" y="358.91" width="3.18" height="1.95" fill="#000"/><rect x="422.30" y="360.84" width="1.59" height="1.95" fill="#000"/><rect x="431.84" y="360.84" width="1.59" height="1.95" fill="#000"/><rect x="435.02" y="360.84" width="3.18" height="1.95" fill="#000"/><rect x="441.39" y="360.84" width="3.18" height="1.95" fill="#000"/><rect x="446.16" y="360.84" width="4.77" height="1.95" fill="#000"/><rect x="454.11" y="360.84" width="1.59" height="1.95" fill="#000"/><rect x="422.30" y="362.77" width="11.13" height="1.95" fill="#000"/><rect x="438.20" y="362.77" width="3.18" height="1.95" fill="#000"/><rect x="442.98" y="362.77" width="9.54" height="1.95" fill="#000"/><rect x="454.11" y="362.77" width="1.59" height="1.95" fill="#000"/><path d="M479.7 333.6 A8.6 12.85 0 1 0 479.7 353.3" fill="none" stroke="#000" stroke-width="2.6"/><path d="M496.4 331.3 H485.9 V355.7 H496.4 M485.9 343 H495.1" fill="none" stroke="#000" stroke-width="2.6"/><rect x="208.0" y="224.06" width="1.8" height="1.7" fill="#111"/><rect x="208.0" y="231.107" width="1.8" height="1.7" fill="#111"/><rect x="208.0" y="247.56" width="1.8" height="1.7" fill="#111"/><rect x="208.0" y="254.607" width="1.8" height="1.7" fill="#111"/><rect x="208.0" y="271.17" width="1.8" height="1.7" fill="#111"/><rect x="208.0" y="277.974" width="1.8" height="1.7" fill="#111"/><rect x="208.0" y="293.726" width="1.8" height="1.7" fill="#111"/><rect x="208.0" y="300.6272" width="1.8" height="1.7" fill="#111"/><rect x="335.0" y="271.17" width="1.8" height="1.7" fill="#111"/><rect x="335.0" y="277.974" width="1.8" height="1.7" fill="#111"/><rect x="335.0" y="293.726" width="1.8" height="1.7" fill="#111"/><rect x="335.0" y="300.6272" width="1.8" height="1.7" fill="#111"/><rect x="413.0" y="233.2" width="1.8" height="1.7" fill="#111"/><rect x="413.0" y="240.49" width="1.8" height="1.7" fill="#111"/><rect x="413.0" y="256.568" width="1.8" height="1.7" fill="#111"/><rect x="413.0" y="262.9346" width="1.8" height="1.7" fill="#111"/><rect x="413.0" y="280.0" width="1.8" height="1.7" fill="#111"/><rect x="413.0" y="287.29" width="1.8" height="1.7" fill="#111"/><rect x="427.0" y="301.2" width="1.8" height="1.7" fill="#111"/><rect x="427.0" y="308.49" width="1.8" height="1.7" fill="#111"/><rect x="185.39999999999998" y="425.988" width="1.8" height="1.7" fill="#111"/><rect x="185.39999999999998" y="433.0836" width="1.8" height="1.7" fill="#111"/><rect x="318.8" y="425.988" width="1.8" height="1.7" fill="#111"/><rect x="318.8" y="433.0836" width="1.8" height="1.7" fill="#111"/></svg>
<div class="t" style="left:172.2px;top:173.0px;font-size:18px;color:#000;font-weight:400;transform:scaleX(0.8953)">山东XX骨科材料股份有限公司</div>
<div class="t" style="left:152.09px;top:219.25px;font-size:15.4px;color:#000;font-weight:400;transform:scaleX(0.9052)">产品名称</div>
<div class="t" style="left:218.22px;top:219.25px;font-size:15.4px;color:#000;font-weight:400;transform:scaleX(0.8799)">尽数锁定解雇板系统</div>
<div class="t" style="left:152.09px;top:242.75px;font-size:15.4px;color:#000;font-weight:400;transform:scaleX(0.9052)">产品描述</div>
<div class="t" style="left:217.31px;top:242.75px;font-size:15.4px;color:#000;font-weight:400;transform:scaleX(0.8915)">胖骨远端外侧加压锁定板-3</div>
<div class="t" style="left:153.25px;top:266.23px;font-size:15.4px;color:#000;font-weight:400;transform:scaleX(0.8856)">生产批号</div>
<div class="t" style="left:218.7px;top:265.75px;font-size:16.5px;color:#000;font-weight:400;transform:scaleX(0.7986)">12345678</div>
<div class="t" style="left:292.84px;top:266.23px;font-size:15.4px;color:#000;font-weight:400;transform:scaleX(0.8558)">序列号</div>
<div class="t" style="left:345.88px;top:265.75px;font-size:16.5px;color:#000;font-weight:400;transform:scaleX(0.8192)">065</div>
<div class="t" style="left:153.25px;top:288.88px;font-size:15.4px;color:#000;font-weight:400;transform:scaleX(0.8856)">生产日期</div>
<div class="t" style="left:218.16px;top:288.5px;font-size:16.5px;color:#000;font-weight:400;transform:scaleX(0.8415)">2021-11-07</div>
<div class="t" style="left:293.7px;top:288.88px;font-size:15.4px;color:#000;font-weight:400;transform:scaleX(0.8178)">检验员</div>
<div class="t" style="left:346.2px;top:288.88px;font-size:15.4px;color:#000;font-weight:400;transform:scaleX(0.8452)">检17</div>
<div class="t" style="left:383.9px;top:228.5px;font-size:15.4px;color:#000;font-weight:400;transform:scaleX(0.869)">型号</div>
<div class="t" style="left:425.0px;top:228.28px;font-size:16.5px;color:#000;font-weight:400;transform:scaleX(0.7855)">WG123</div>
<div class="t" style="left:383.9px;top:251.45px;font-size:15.4px;color:#000;font-weight:400;transform:scaleX(0.869)">规格</div>
<div class="t" style="left:423.2px;top:251.7px;font-size:15.4px;color:#000;font-weight:400;transform:scaleX(0.8816)">4孔右</div>
<div class="t" style="left:383.9px;top:275.3px;font-size:15.4px;color:#000;font-weight:400;transform:scaleX(0.869)">编码</div>
<div class="t" style="left:424.2px;top:275.3px;font-size:16.5px;color:#000;font-weight:400;transform:scaleX(0.7958)">12345678</div>
<div class="t" style="left:383.9px;top:296.5px;font-size:15.4px;color:#000;font-weight:400;transform:scaleX(0.8533)">检验员</div>
<div class="t" style="left:437.3px;top:296.0px;font-size:15.4px;color:#000;font-weight:400;transform:scaleX(0.871)">检17</div>
<div class="t" style="left:496.69px;top:220.88px;font-size:29px;color:#000;font-weight:400;transform:scaleX(0.8147)">合格证</div>
<div class="t" style="left:194.93px;top:367.85px;font-size:13.5px;color:#000;font-weight:400;transform:scaleX(1.0667)">(</div>
<div class="t" style="left:198.81px;top:368.27px;font-size:14px;color:#000;font-weight:400;transform:scaleX(0.944)">06912547109123</div>
<div class="t" style="left:153.93px;top:394.85px;font-size:15.4px;color:#000;font-weight:400;transform:scaleX(0.875)">XX市XX区XX街XX号</div>
<div class="t" style="left:154.28px;top:421.2px;font-size:15.4px;color:#000;font-weight:400;transform:scaleX(0.9179)">电话</div>
<div class="t" style="left:193.18px;top:421.8px;font-size:16.5px;color:#000;font-weight:400;transform:scaleX(0.8184)">0631-88888123</div>
<div class="t" style="left:287.3px;top:421.2px;font-size:15.4px;color:#000;font-weight:400;transform:scaleX(0.9172)">传真</div>
<div class="t" style="left:325.36px;top:421.8px;font-size:16.5px;color:#000;font-weight:400;transform:scaleX(0.836)">0631-88888123</div>
<div class="t" style="left:425.42px;top:396.15px;font-size:15.4px;color:#000;font-weight:400;transform:scaleX(0.8789)">其他内容详见说明书</div>
<div class="t" style="left:426.01px;top:421.65px;font-size:15.4px;color:#000;font-weight:400;transform:scaleX(0.8862)">国械注准</div>
<div class="t" style="left:478.09px;top:421.4px;font-size:16.5px;color:#000;font-weight:400;transform:scaleX(0.8051)">20173412345</div>
<div class="t" style="left:16.0px;top:45.75px;font-size:7.6px;color:#333;font-weight:400;transform:scaleX(0.8)">文件</div>
<div class="t" style="left:48.61px;top:45.0px;font-size:7.6px;color:#333;font-weight:400;transform:scaleX(0.8929)">新建</div>
<div class="t" style="left:66.93px;top:45.0px;font-size:7.6px;color:#333;font-weight:400;transform:scaleX(0.8714)">打开</div>
<div class="t" style="left:84.64px;top:45.0px;font-size:7.6px;color:#333;font-weight:400;transform:scaleX(0.8571)">保存</div>
<div class="t" style="left:102.5px;top:45.0px;font-size:7.6px;color:#333;font-weight:400;transform:scaleX(1.0)">打印</div>
<div class="t" style="left:130.14px;top:27.25px;font-size:7.6px;color:#9a9a9a;font-weight:400;transform:scaleX(0.8571)">剪切</div>
<div class="t" style="left:161.0px;top:27.75px;font-size:7.6px;color:#9a9a9a;font-weight:400;transform:scaleX(0.8)">删除</div>
<div class="t" style="left:130.14px;top:44.88px;font-size:7.6px;color:#9a9a9a;font-weight:400;transform:scaleX(0.8571)">复制</div>
<div class="t" style="left:161.0px;top:44.88px;font-size:7.6px;color:#9a9a9a;font-weight:400;transform:scaleX(0.8)">粘贴</div>
<div class="t" style="left:180.2px;top:45.0px;font-size:7.6px;color:#333;font-weight:400;transform:scaleX(0.8)">撤销</div>
<div class="t" style="left:199.0px;top:45.0px;font-size:7.6px;color:#9a9a9a;font-weight:400;transform:scaleX(0.8)">恢复</div>
<div class="t" style="left:218.0px;top:45.25px;font-size:7.6px;color:#333;font-weight:400;transform:scaleX(0.7581)">标签设置</div>
<div class="t" style="left:247.23px;top:45.25px;font-size:7.6px;color:#333;font-weight:400;transform:scaleX(0.7667)">视图旋转</div>
<div class="t" style="left:276.68px;top:45.25px;font-size:7.6px;color:#333;font-weight:400;transform:scaleX(0.8214)">放大</div>
<div class="t" style="left:295.0px;top:45.25px;font-size:7.6px;color:#333;font-weight:400;transform:scaleX(0.75)">缩小</div>
<div class="t" style="left:312.72px;top:45.75px;font-size:7.6px;color:#333;font-weight:400;transform:scaleX(0.7833)">适应窗口</div>
<div class="t" style="left:352.22px;top:27.5px;font-size:7.6px;color:#9a9a9a;font-weight:400;transform:scaleX(0.7763)">前一条数据</div>
<div class="t" style="left:352.22px;top:45.0px;font-size:7.6px;color:#9a9a9a;font-weight:400;transform:scaleX(0.7763)">后一条数据</div>
<div class="t" style="left:399.72px;top:27.5px;font-size:7.6px;color:#9a9a9a;font-weight:400;transform:scaleX(0.7833)">最前数据</div>
<div class="t" style="left:399.72px;top:45.0px;font-size:7.6px;color:#9a9a9a;font-weight:400;transform:scaleX(0.7833)">最后数据</div>
<div class="t" style="left:440.72px;top:27.5px;font-size:7.6px;color:#9a9a9a;font-weight:400;transform:scaleX(0.7833)">刷新数据</div>
<div class="t" style="left:440.7px;top:45.0px;font-size:7.6px;color:#333;font-weight:400;transform:scaleX(0.7955)">数据库</div>
<div class="t" style="left:16.3px;top:72.55px;font-size:7.6px;color:#333;font-weight:400;transform:scaleX(0.8333)">文本</div>
<div class="t" style="left:15.47px;top:105.0px;font-size:7.6px;color:#333;font-weight:400;transform:scaleX(0.8333)">条码</div>
<div class="t" style="left:16.13px;top:138.75px;font-size:7.6px;color:#333;font-weight:400;transform:scaleX(0.7696)">二维码</div>
<div class="t" style="left:16.04px;top:170.75px;font-size:7.6px;color:#333;font-weight:400;transform:scaleX(0.8643)">图片</div>
<div class="t" style="left:16.09px;top:202.85px;font-size:7.6px;color:#333;font-weight:400;transform:scaleX(0.8067)">图形</div>
<div class="t" style="left:15.95px;top:236.2px;font-size:7.6px;color:#333;font-weight:400;transform:scaleX(0.85)">图标</div>
<div class="t" style="left:15.95px;top:269.15px;font-size:7.6px;color:#333;font-weight:400;transform:scaleX(0.85)">表格</div>
<div class="t" style="left:55.0px;top:66.45px;font-size:7.6px;color:#8a8a8a;font-weight:400;transform:scaleX(0.7742)">微软雅黑</div>
<div class="t" style="left:137.53px;top:66.25px;font-size:8.5px;color:#7a7a7a;font-weight:400;transform:scaleX(1.1667)">7</div>
<div class="t" style="left:72.96px;top:7.25px;font-size:7.6px;color:#333;font-weight:400;transform:scaleX(0.7863)">新建标签1 *</div>
<div class="t" style="left:14.15px;top:6.62px;font-size:9.5px;color:#3a9ef2;font-weight:700;transform:scaleX(0.85)">label</div>
<div class="t" style="left:715.36px;top:92.55px;font-size:9px;color:#3d3df2;font-weight:400;transform:scaleX(0.8869)">未选定项目</div>
<div class="t" style="left:691.16px;top:104.33px;font-size:7.6px;color:#333;font-weight:400;transform:scaleX(0.736)">选择设计表面上的一个或多个项目</div>
<div class="t" style="left:711.04px;top:306.9px;font-size:7.6px;color:#b5b5b5;font-weight:400;transform:scaleX(0.7597)">编辑变的如此简单</div>
<div class="t" style="left:18.74px;top:521.7px;font-size:7.6px;color:#333;font-weight:400;transform:scaleX(0.7632)">导出为WPS PDF</div>
<div class="t" style="left:115.5px;top:521.5px;font-size:7.6px;color:#333;font-weight:400;transform:scaleX(0.7773)">标签：(新建标签1)80mm*50mm</div>
<div class="t" style="left:222.23px;top:522.0px;font-size:7.6px;color:#333;font-weight:400;transform:scaleX(0.7714)">数据库：</div>
<div class="t" style="left:269.4px;top:522.0px;font-size:7.6px;color:#333;font-weight:400;transform:scaleX(0.8036)">位置：0.04mm 13.27mm</div>
</body></html>
